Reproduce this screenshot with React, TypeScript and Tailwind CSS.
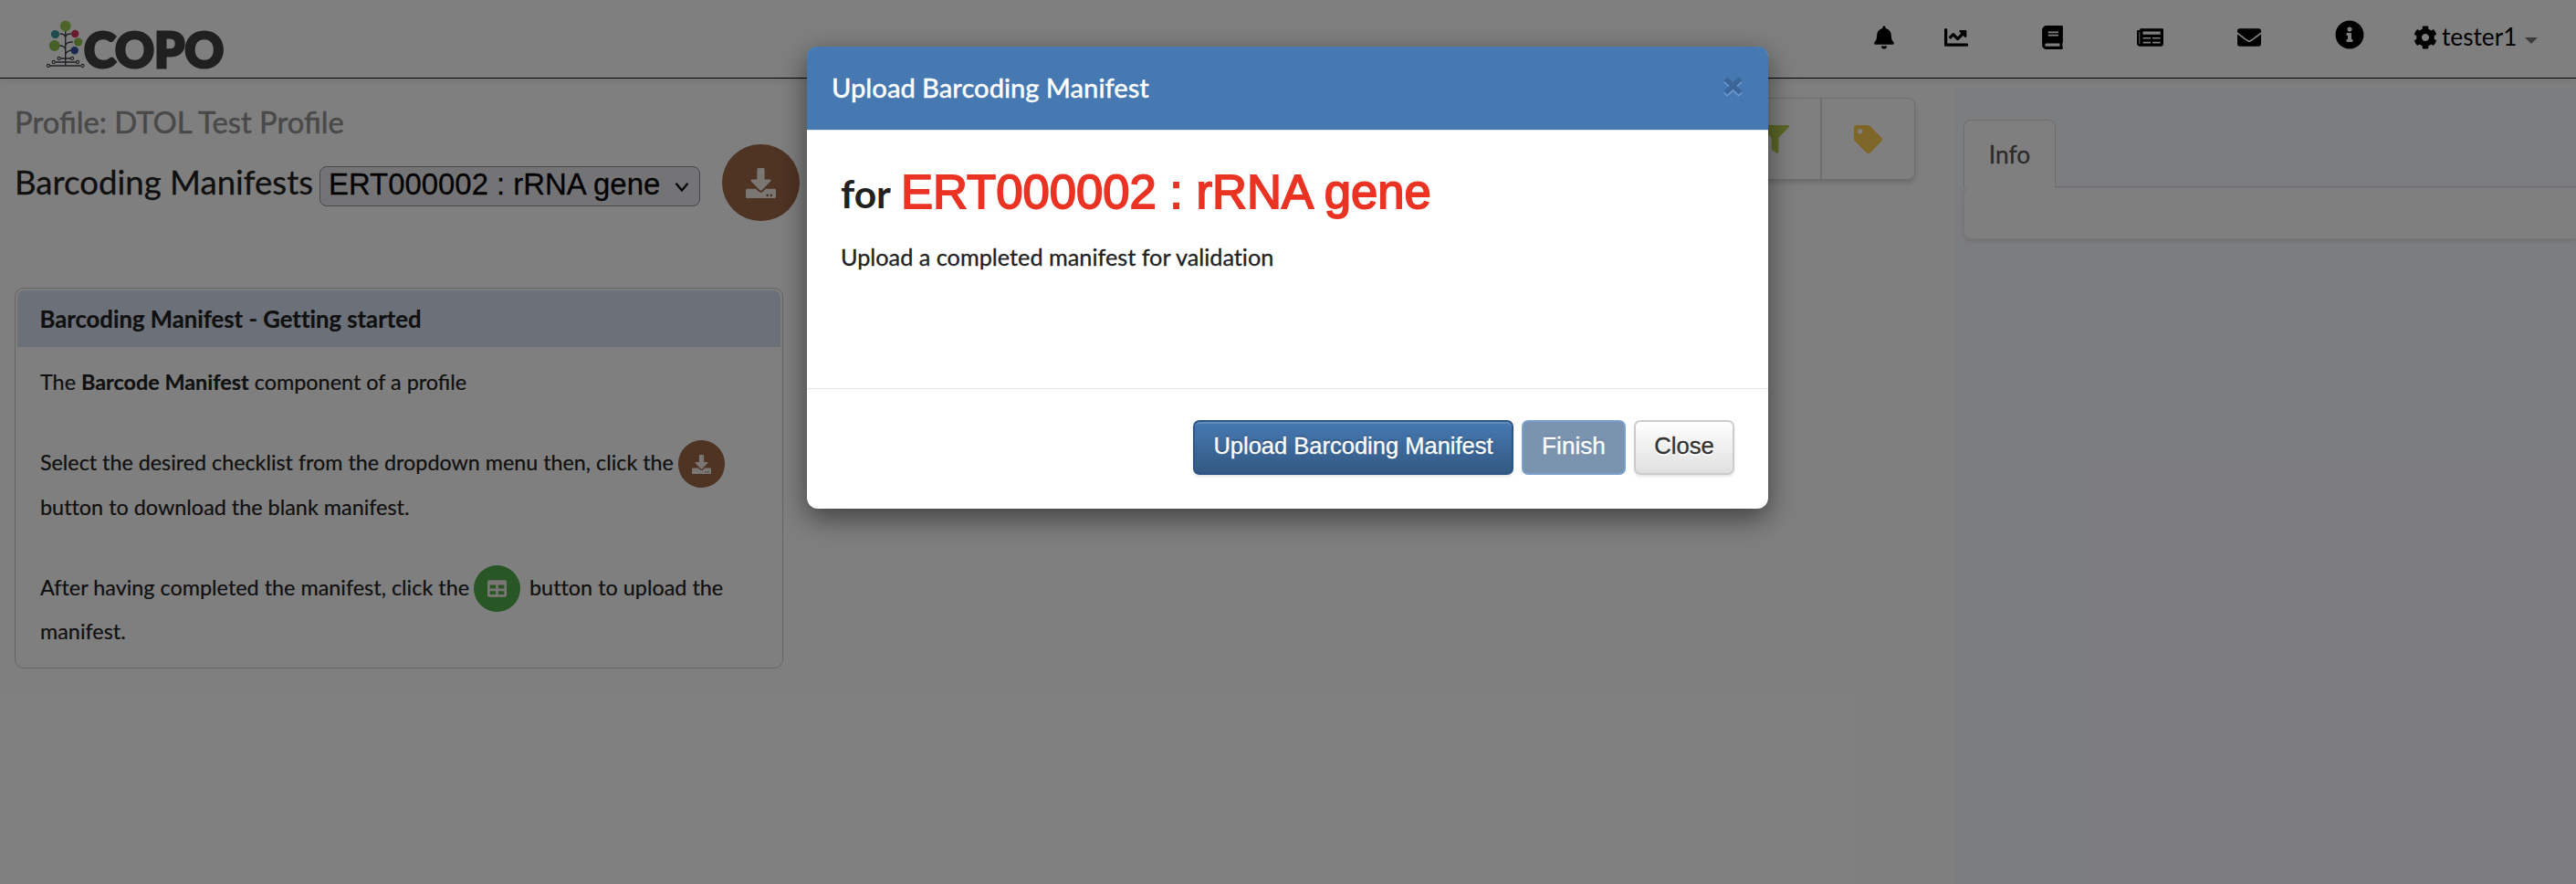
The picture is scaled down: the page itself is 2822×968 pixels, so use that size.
import type { ReactNode } from "react";
import {
  FaBell,
  FaBook,
  FaChartLine,
  FaCog,
  FaDownload,
  FaEnvelope,
  FaFilter,
  FaInfoCircle,
  FaNewspaper,
  FaTable,
  FaTag,
} from "react-icons/fa";

function TreeMark() {
  return (
    <svg className="h-[54px] w-[43px]" viewBox="50 22 43 54" fill="none" stroke="#3f3f48" strokeWidth="1.4">
      <path d="M71.7 32v40M71.7 41q-.5-4-6-4M71.7 41q.5-4 6-4M71.7 50q.5-4 8-4M71.7 54q-.5-4-7-4M71.7 60q.5-4 7-5" />
      <path d="M66.500 64h10.500M60.700 68h22.300M55 72h33.500" />
      <g strokeWidth="1.1">
        <circle cx="64.700" cy="64" r="1.600" />
        <circle cx="79" cy="64" r="1.600" />
        <circle cx="58.700" cy="68" r="1.600" />
        <circle cx="85" cy="68" r="1.600" />
        <circle cx="53" cy="72" r="1.600" />
        <circle cx="90.500" cy="72" r="1.600" />
      </g>
      <g stroke="none">
        <circle cx="71.700" cy="28.500" r="5.900" fill="#9bcb50" />
        <circle cx="60.500" cy="37.500" r="4.600" fill="#3a9a96" />
        <circle cx="82.200" cy="37" r="4.200" fill="#d4335f" />
        <circle cx="85.700" cy="46" r="4.600" fill="#8fc04a" />
        <circle cx="59.700" cy="50" r="5.900" fill="#8fc04a" />
        <circle cx="81.700" cy="55.200" r="4.200" fill="#37509a" />
      </g>
    </svg>
  );
}

function Header() {
  return (
    <header className="flex h-[86px] items-start border-b border-black bg-white shadow-[0_3px_6px_rgba(0,0,0,0.08)]">
      <div className="flex pt-[22px] pl-[50px]">
        <TreeMark />
        <span className="-ml-[1px] pt-[11px] text-[53px] leading-[41px] font-black text-[#404040] [-webkit-text-stroke:3px_#404040]">
          COPO
        </span>
      </div>
      <nav className="ml-auto flex h-[81px] items-center pr-[42px] text-black">
        <FaBell className="h-[26px] w-[22px]" />
        <FaChartLine className="ml-[55px] h-[26px] w-[26px]" />
        <FaBook className="ml-[81px] h-[26px] w-[23px]" />
        <FaNewspaper className="ml-[81px] h-[26px] w-[29px]" />
        <FaEnvelope className="ml-[81px] h-[26px] w-[26px]" />
        <FaInfoCircle className="mb-[5px] ml-[81px] h-[32px] w-[32px]" />
        <FaCog className="ml-[54px] h-[26px] w-[26px]" />
        <span className="mb-[1px] ml-[5px] w-[84px] text-[26.2px] leading-[40px]">tester1</span>
        <span className="mt-[8px] ml-[7px] border-x-[7px] border-t-[7px] border-x-transparent border-t-[#777]" />
      </nav>
    </header>
  );
}

function RoundIcon({ className, children }: { className: string; children: ReactNode }) {
  return <span className={`flex shrink-0 items-center justify-center rounded-full text-[#f4ece8] ${className}`}>{children}</span>;
}

function GettingStarted() {
  return (
    <section className="mt-[73px] h-[417px] w-[842px] rounded-[10px] border border-[#cacaca] bg-white p-[2px] text-[23.4px] text-[#212121] [-webkit-text-stroke:0.2px_#212121]">
      <h3 className="flex h-[62px] items-center rounded-t-[8px] bg-[#d9e1f0] pl-[24.500px] text-[25.700px] leading-[48px] font-bold [font-variant-ligatures:none]">
        Barcoding Manifest - Getting started
      </h3>
      <div className="pt-[14px] pl-[25px] leading-[48px] whitespace-nowrap">
        <p className="h-[48px]">
          The <b>Barcode Manifest</b> component of a profile
        </p>
        <p className="mt-[40px] flex h-[49px] items-center [font-variant-ligatures:none]">
          <span className="mb-[1px] w-[699px] text-[23.300px]">
            Select the desired checklist from the dropdown menu then, click the
          </span>
          <RoundIcon className="mt-[3px] h-[52px] w-[51px] bg-[#9e6646]">
            <FaDownload className="h-[21px] w-[21px]" />
          </RoundIcon>
        </p>
        <p className="h-[48px] [font-variant-ligatures:none]">button to download the blank manifest.</p>
        <p className="mt-[39px] flex h-[49px] items-center [font-variant-ligatures:none]">
          <span className="w-[475px]">After having completed the manifest, click the</span>
          <RoundIcon className="mt-[3px] h-[51px] w-[51px] bg-[#50ac4b]">
            <FaTable className="h-[21px] w-[21px]" />
          </RoundIcon>
          <span className="ml-[10px]">button to upload the</span>
        </p>
        <p className="h-[48px]">manifest.</p>
      </div>
    </section>
  );
}

function Workspace() {
  return (
    <div className="w-[876px] shrink-0 pt-[28px] pl-[16px]">
      <h2 className="text-[32.800px] leading-[40px] text-[#929292] [-webkit-text-stroke:0.5px_#929292]">
        Profile: DTOL Test Profile
      </h2>
      <div className="mt-[4px] flex h-[84px] items-center">
        <h1 className="mb-[3px] w-[334px] text-[36.600px] leading-[40px] whitespace-nowrap text-[#212121] [-webkit-text-stroke:0.3px_#212121]">
          Barcoding Manifests
        </h1>
        <button className="mt-[8px] flex h-[44px] w-[417px] items-center justify-between rounded-[8px] border border-[#8f8f9d] bg-[#e9e9ed] pr-[11px] pb-[5px] pl-[9px] font-['Liberation_Sans'] text-[32.900px] leading-[38px] text-black [-webkit-text-stroke:0.3px_#000]">
          ERT000002 : rRNA gene
          <svg className="mt-[6px] h-[12px] w-[16px]" viewBox="0 0 16 12" fill="none" stroke="#000" strokeWidth="2.200">
            <path d="M1.500 1.800 8 9.500l6.500-7.700" />
          </svg>
        </button>
        <RoundIcon className="ml-[24px] h-[84px] w-[85px] bg-[#9e6646]">
          <FaDownload className="h-[33px] w-[33px]" />
        </RoundIcon>
      </div>
      <GettingStarted />
    </div>
  );
}

function Toolbar() {
  return (
    <div className="mt-[21px] mr-[44px] ml-auto flex h-[90px] rounded-[8px] border border-[#dcdcdd] bg-white shadow-[0_3px_5px_rgba(0,0,0,0.16)]">
      <button className="flex w-[101px] items-center justify-center border-r-2 border-[#dcdcdd] text-[#b8cc4c]">
        <FaFilter className="h-[31px] w-[31px]" />
      </button>
      <button className="flex w-[101px] items-center justify-center text-[#facc4e]">
        <FaTag className="h-[31px] w-[31px]" />
      </button>
    </div>
  );
}

function InfoPanel() {
  return (
    <aside className="mt-[10px] w-[680px] shrink-0 overflow-hidden bg-[#f9fafe] pt-[35px] pl-[9px]">
      <div className="flex h-[74px] border-b border-[#dbdde0]">
        <div className="flex h-[75px] w-[101px] items-center justify-center rounded-t-[8px] border border-b-0 border-[#dbdde0] bg-white text-[26.300px] leading-[40px] text-[#555] [-webkit-text-stroke:0.3px_#555]">
          Info
        </div>
      </div>
      <div className="h-[57px] rounded-l-[8px] border border-r-0 border-[#f0f0f8] bg-white shadow-[0_2px_5px_rgba(0,0,0,0.1)]" />
    </aside>
  );
}

function UploadDialog() {
  return (
    <div className="absolute top-[51px] left-[884px] flex h-[506px] w-[1053px] flex-col rounded-[12px] bg-white shadow-[0_10px_30px_rgba(0,0,0,0.5)]">
      <div className="flex h-[92px] items-center justify-between rounded-t-[11px] border-b border-[#e5e5e5] bg-[#4679b2] pr-[28px] pl-[27px] text-[29.100px] leading-[40px] font-medium text-white">
        <span className="mb-[1px] [-webkit-text-stroke:0.3px_#fff]">Upload Barcoding Manifest</span>
        <svg className="mb-[3px] h-[24px] w-[21px]" viewBox="0 0 21 24" fill="none" strokeWidth="5.600">
          <path d="M2.300 5.300l16.400 15.400M18.700 5.300L2.300 20.700" stroke="#6d9fd6" />
          <path d="M2.300 3.300l16.400 15.400M18.700 3.300L2.300 18.700" stroke="#3c6697" />
        </svg>
      </div>
      <div className="h-[282px] pt-[37px] pl-[37px] text-[#212121]">
        <h4 className="flex h-[60px] items-baseline gap-[11px] text-[42.500px] leading-[60px] font-bold whitespace-nowrap">
          for
          <span className="font-['Liberation_Sans'] text-[52.600px] font-normal text-[#ea3323] [-webkit-text-stroke:1.8px_#ea3323]">
            ERT000002 : rRNA gene
          </span>
        </h4>
        <p className="mt-[26px] text-[25.250px] leading-[30px] [-webkit-text-stroke:0.3px_#212121] [font-variant-ligatures:none]">
          Upload a completed manifest for validation
        </p>
      </div>
      <div className="flex gap-[9px] border-t border-[#e5e5e5] pt-[34px] pl-[423px] font-['Liberation_Sans'] text-[25.700px] leading-[36px] whitespace-nowrap">
        <button className="h-[60px] w-[351px] rounded-[7px] border-2 border-[#2d5588] bg-linear-to-b from-[#4679b2] to-[#335983] pb-[4px] text-[25.500px] text-white shadow-[inset_0_2px_0_rgba(255,255,255,0.15),0_2px_3px_rgba(0,0,0,0.1)] [-webkit-text-stroke:0.3px_#fff] [text-shadow:0_-2px_0_rgba(0,0,0,0.2)]">
          Upload Barcoding Manifest
        </button>
        <button className="h-[60px] w-[114px] rounded-[7px] border-2 border-[#7ba0cb] bg-[#7a93af] pb-[4px] text-[26.200px] text-white [-webkit-text-stroke:0.3px_#fff] [text-shadow:0_-2px_0_rgba(0,0,0,0.1)]">
          Finish
        </button>
        <button className="h-[60px] w-[110px] rounded-[7px] border-2 border-[#cccccc] bg-linear-to-b from-white to-[#e0e0e0] pb-[4px] text-[#333] shadow-[0_2px_3px_rgba(0,0,0,0.1)] [-webkit-text-stroke:0.3px_#333] [text-shadow:0_2px_0_#fff]">
          Close
        </button>
      </div>
    </div>
  );
}

export default function App() {
  return (
    <div className="relative flex h-[968px] w-[2822px] flex-col overflow-hidden bg-white font-[Lato,sans-serif]">
      <Header />
      <main className="flex flex-1 items-stretch">
        <Workspace />
        <Toolbar />
        <InfoPanel />
      </main>
      <div className="absolute inset-0 bg-black/50" />
      <UploadDialog />
    </div>
  );
}
